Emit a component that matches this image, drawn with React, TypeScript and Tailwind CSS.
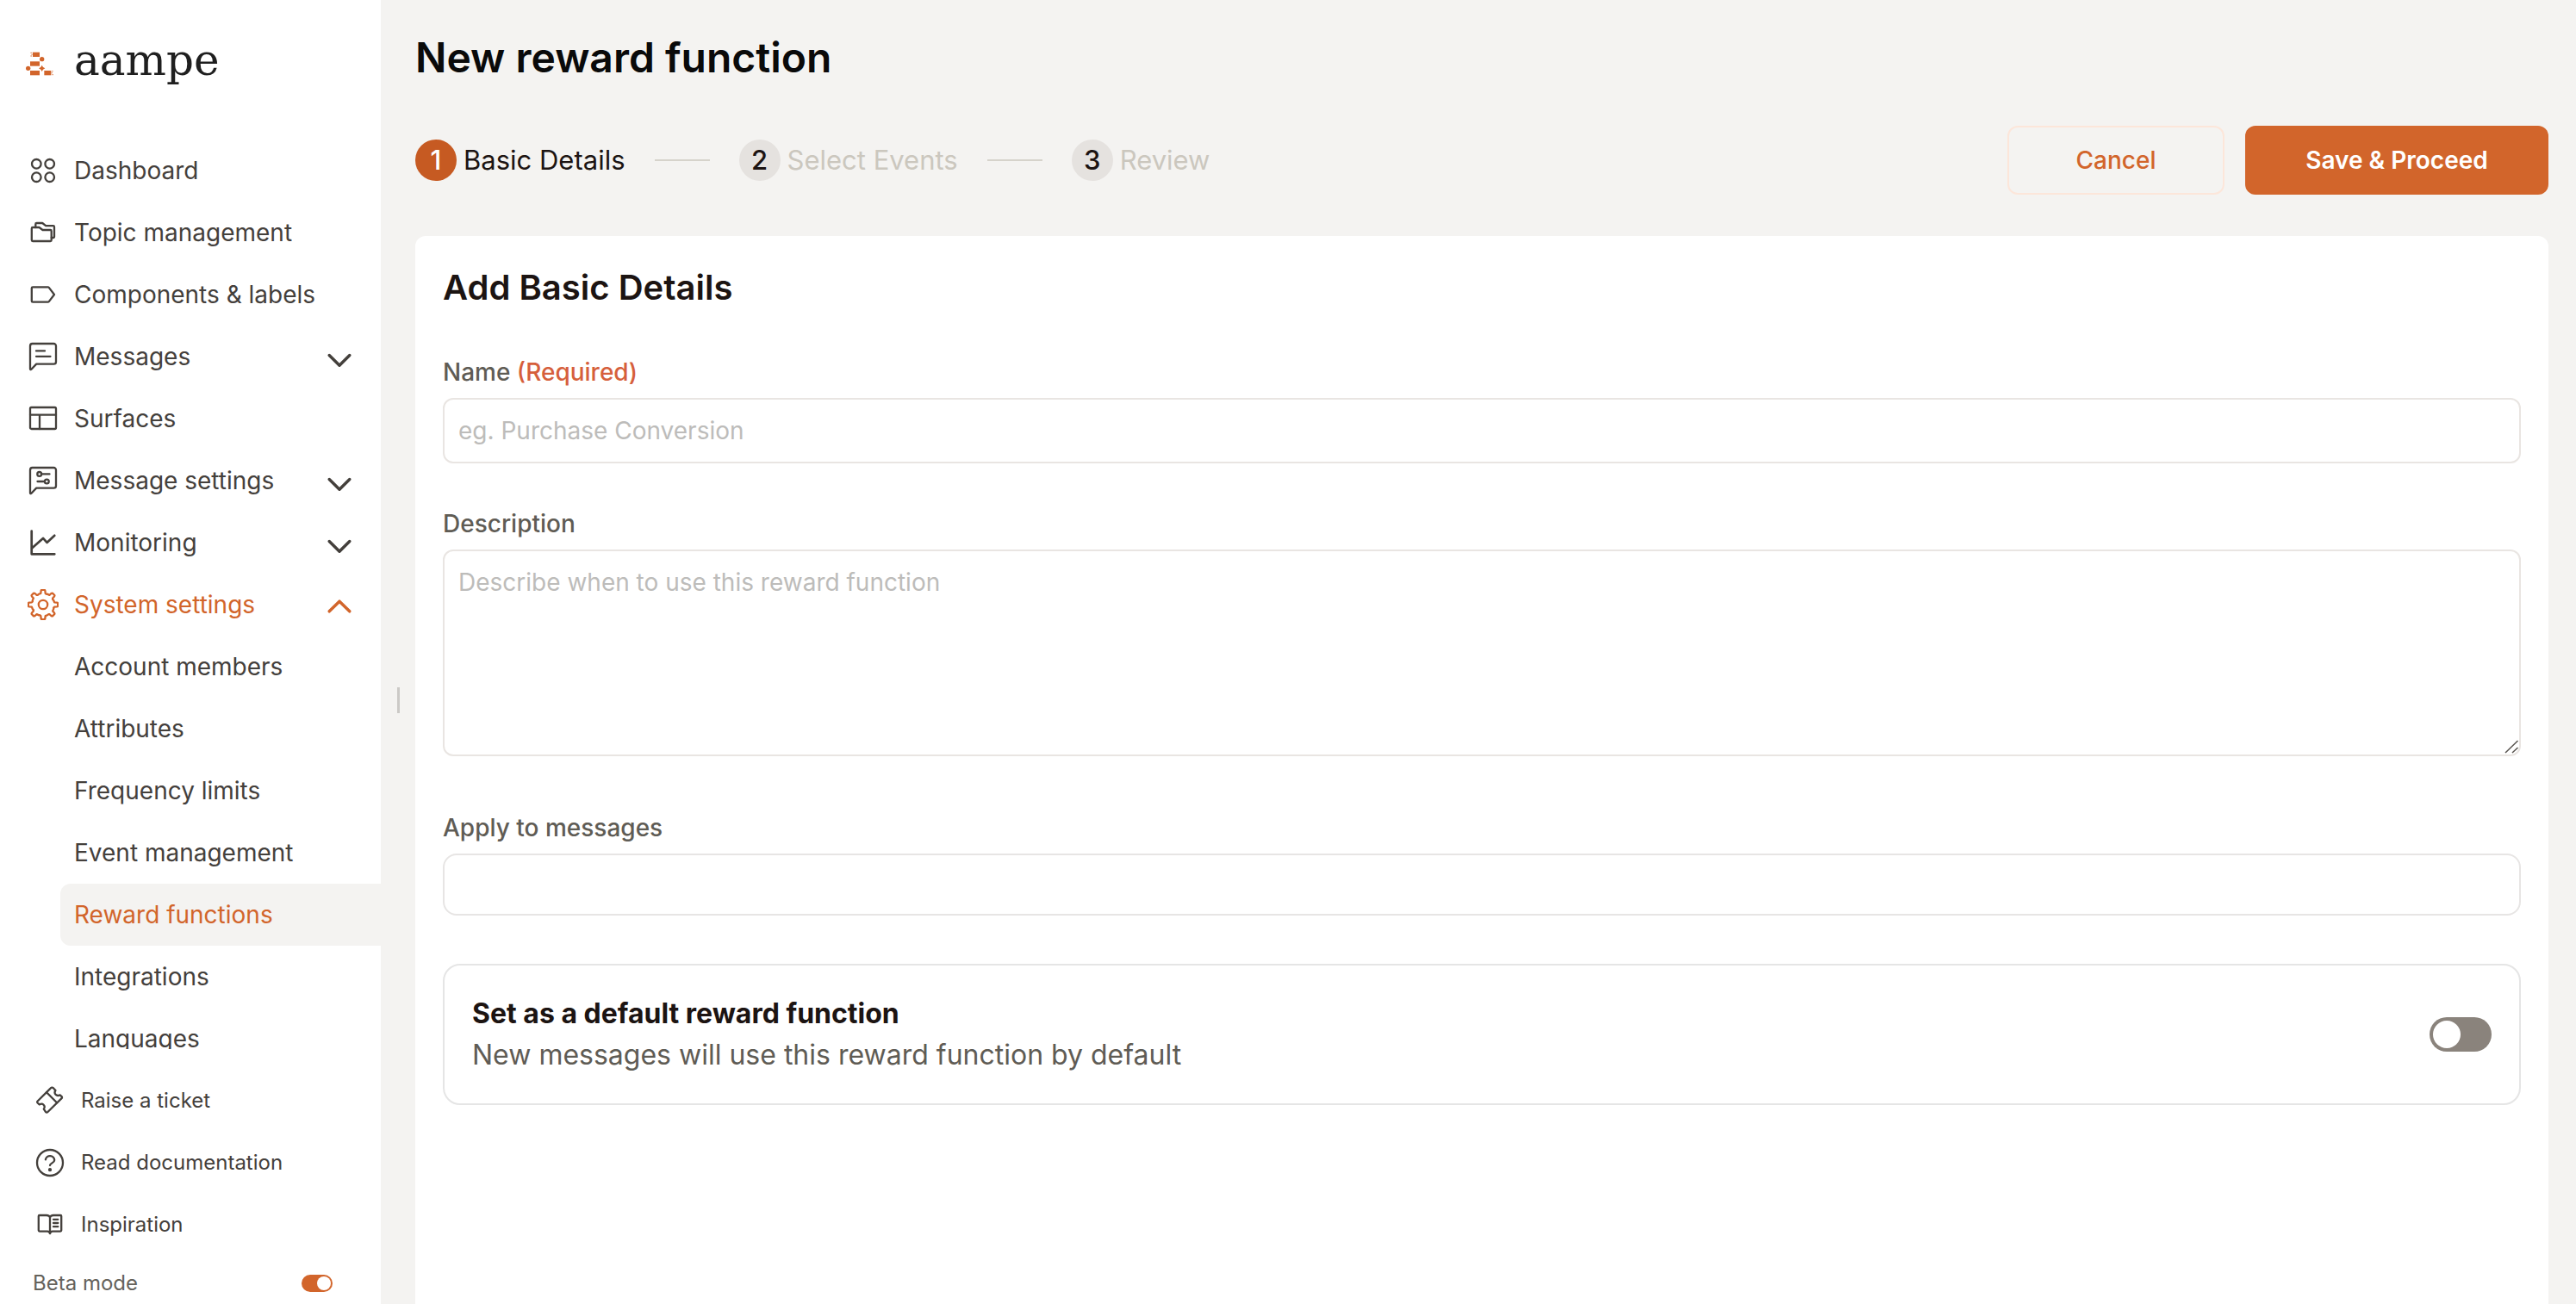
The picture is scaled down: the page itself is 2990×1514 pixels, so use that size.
import type React from "react"

import { useState } from "react"
import clsx from "clsx"

// Eight-toothed cog outline around (18, 18)
const cogPath =
  Array.from({ length: 8 }, (_, i) => {
    const mid = (i * Math.PI) / 4 - Math.PI / 2
    const at = (radius: number, angle: number) =>
      `${(18 + radius * Math.cos(mid + angle)).toFixed(2)} ${(18 + radius * Math.sin(mid + angle)).toFixed(2)}`
    return `${i === 0 ? "M" : "L"}${at(13.4, -0.2)} L${at(16.2, -0.15)} Q${at(17.4, -0.13)} ${at(17.2, -0.06)} L${at(17.2, 0.06)} Q${at(17.4, 0.13)} ${at(16.2, 0.15)} L${at(13.4, 0.2)} Q${at(12.2, 0.3)} ${at(13.2, 0.36)}`
  }).join(" ") + " Z"

const bubble = "M5.5 3h24.8A2.7 2.7 0 0 1 33 5.7v18.2a2.7 2.7 0 0 1-2.7 2.7H10.2L4.4 32.8c-.6.6-1.4.3-1.4-.6V5.7A2.7 2.7 0 0 1 5.5 3z"

const icons: Record<string, React.ReactNode> = {
  dashboard: (
    <>
      <circle cx="10.3" cy="10.3" r="5.3" />
      <circle cx="25.7" cy="10.3" r="5.3" />
      <circle cx="10.3" cy="25.7" r="5.3" />
      <circle cx="25.7" cy="25.7" r="5.3" />
    </>
  ),
  folders: (
    <>
      <path d="M6 12h7.5l4 3h9a1.2 1.2 0 0 1 1.2 1.2v10.6a1.2 1.2 0 0 1-1.2 1.2H6a1.2 1.2 0 0 1-1.2-1.2V13.2A1.2 1.2 0 0 1 6 12z" />
      <path d="M9.3 12V8.2A1.2 1.2 0 0 1 10.5 7h6.7l4 3.2h8.6a1.2 1.2 0 0 1 1.2 1.2v11.4a1.2 1.2 0 0 1-1.2 1.2h-2" />
    </>
  ),
  label: <path d="M6 9.3h17.6a1.5 1.5 0 0 1 1.2.6L31 18l-6.2 8.1a1.5 1.5 0 0 1-1.2.6H6a1.2 1.2 0 0 1-1.2-1.2v-15A1.2 1.2 0 0 1 6 9.3z" />,
  message: (
    <>
      <path d={bubble} />
      <path d="M10 11.4h10M10 17.8h16.5" />
    </>
  ),
  layout: (
    <>
      <rect x="3" y="5" width="30" height="25" rx="1.5" />
      <path d="M3 13.6h30M14 13.6V30" />
    </>
  ),
  messageSettings: (
    <>
      <path d={bubble} />
      <circle cx="13.7" cy="10.4" r="2.4" />
      <circle cx="22.3" cy="19" r="2.4" />
      <path d="M16.2 10.4h9.3M11.5 19h8.3" />
    </>
  ),
  chart: (
    <>
      <path strokeWidth="2.7" d="M4.7 4.5v26.8h26.6" />
      <path strokeWidth="2.7" d="M5.3 24.2L18 12.9l4.5 5 8.8-8.1" />
    </>
  ),
  cog: (
    <>
      <path d={cogPath} />
      <circle cx="18" cy="18" r="5.2" />
    </>
  ),
  ticket: (
    <>
      <path d="M18.6 3.6L3.6 18.5a1.4 1.4 0 0 0 0 2l2.1 1.9c1.5-.8 3.5-1.1 4.9.3s1.2 3.5.2 5l2.3 3.4a1.4 1.4 0 0 0 2.1.1L31.6 15.1a1.3 1.3 0 0 0 0-1.9l-2-1.9c-1.5.8-3.6.9-4.9-.4s-1.3-3.4-.3-4.9l-2.3-2.6a2.5 2.5 0 0 0-3.5.2z" />
      <path d="M14 8.2l12 12" />
    </>
  ),
  help: (
    <>
      <circle cx="18" cy="18" r="15" />
      <path d="M12.9 14.3a5.2 5.2 0 0 1 10.3.6c0 3.2-5.2 3.6-5.2 6.2" />
      <circle cx="18" cy="26.2" r="1" fill="currentColor" />
    </>
  ),
  book: (
    <>
      <path d="M5.8 7H14c2.2 0 4 1.2 4 2.8C18 8.2 19.8 7 22 7h8.2a1 1 0 0 1 1 1v16.6a1 1 0 0 1-1 1H21c-1.6 0-2.6 1-3 2.6-.4-1.6-1.4-2.6-3-2.6H5.8a1 1 0 0 1-1-1V8a1 1 0 0 1 1-1zM18 9.8V28" />
      <path d="M22 11.8h5.3M22 16h5.3M22 20.2h5.3" />
    </>
  ),
  chevronDown: <path strokeWidth="3.5" d="M6.2 16.6L18 28.2l11.8-11.6" />,
  chevronUp: <path strokeWidth="3.5" d="M6.2 25.8L18 14.2l11.8 11.6" />,
}

function Icon({ name }: { name: string }) {
  return (
    <svg
      viewBox="0 0 36 36"
      className="h-9 w-9 shrink-0"
      fill="none"
      stroke="currentColor"
      strokeWidth="2.3"
      strokeLinecap="round"
      strokeLinejoin="round"
      aria-hidden="true"
    >
      {icons[name]}
    </svg>
  )
}

function Logo() {
  return (
    <svg viewBox="90 156 96 108" className="h-9 w-8 shrink-0" fill="#d2652b" aria-hidden="true">
      <rect x="114" y="182" width="24" height="16" />
      <path d="M106 182h6v4h-6zM109 188h4v4h-4zM106 193h5v4h-5z" opacity="0.6" />
      <circle cx="146" cy="206" r="8" />
      <rect x="105" y="214" width="33" height="16" />
      <circle cx="98" cy="238" r="8" />
      <path d="M146 227l4 7 7 4-7 4-4 7-4-7-7-4 7-4z" />
      <rect x="105" y="246" width="33" height="16" />
      <rect x="154" y="246" width="24" height="16" />
      <path d="M180 246h5v4h-5zM179 252h4v4h-4zM181 258h5v4h-5z" opacity="0.6" />
    </svg>
  )
}

const menu = [
  { label: "Dashboard", icon: "dashboard" },
  { label: "Topic management", icon: "folders" },
  { label: "Components & labels", icon: "label" },
  { label: "Messages", icon: "message", group: true },
  { label: "Surfaces", icon: "layout" },
  { label: "Message settings", icon: "messageSettings", group: true },
  { label: "Monitoring", icon: "chart", group: true },
]

const systemSettings = [
  "Account members",
  "Attributes",
  "Frequency limits",
  "Event management",
  "Reward functions",
  "Integrations",
  "Languages",
]

const help = [
  { label: "Raise a ticket", icon: "ticket" },
  { label: "Read documentation", icon: "help" },
  { label: "Inspiration", icon: "book" },
]

const steps = ["Basic Details", "Select Events", "Review"]

function Sidebar() {
  const [open, setOpen] = useState(true)
  const [beta, setBeta] = useState(true)
  const row = "flex h-[72px] w-full shrink-0 items-center gap-[18px] pl-8 pr-[30px] text-left"

  return (
    <aside className="flex w-[442px] shrink-0 flex-col bg-white text-[28px] text-[#44403c]">
      <div className="flex h-[162px] shrink-0 items-start px-[30px] pt-[42px]">
        <a href="#" className="flex items-center gap-6">
          <Logo />
          <span className="font-['DejaVu_Serif',serif] text-[50px] leading-[56px] text-[#1f1f1f]">aampe</span>
        </a>
      </div>

      <nav className="min-h-0 flex-1 overflow-x-hidden overflow-y-auto [scrollbar-width:none]">
        {menu.map((item) =>
          item.group ? (
            <button key={item.label} type="button" className={row}>
              <Icon name={item.icon} />
              <span className="flex-1">{item.label}</span>
              <Icon name="chevronDown" />
            </button>
          ) : (
            <a key={item.label} href="#" className={row}>
              <Icon name={item.icon} />
              {item.label}
            </a>
          ),
        )}
        <button type="button" aria-expanded={open} onClick={() => setOpen(!open)} className={clsx(row, "text-[#d2652b]")}>
          <Icon name="cog" />
          <span className="flex-1">System settings</span>
          <Icon name={open ? "chevronUp" : "chevronDown"} />
        </button>
        {open && (
          <div className="pl-[70px]">
            {systemSettings.map((label) => (
              <a
                key={label}
                href="#"
                className={clsx(
                  "flex h-[72px] items-center rounded-l-xl pl-4",
                  label === "Reward functions" && "bg-[#f4f3f1] text-[#d2652b]",
                )}
              >
                {label}
              </a>
            ))}
          </div>
        )}
      </nav>

      <div className="shrink-0 pt-6 text-2xl">
        {help.map((item) => (
          <a key={item.label} href="#" className="flex h-[72px] items-center gap-[18px] pl-10">
            <Icon name={item.icon} />
            {item.label}
          </a>
        ))}
        <div className="flex h-14 items-center justify-between pt-2 pl-[38px] pr-14 text-[#65625b]">
          <label htmlFor="beta">Beta mode</label>
          <input
            id="beta"
            type="checkbox"
            role="switch"
            checked={beta}
            onChange={(e) => setBeta(e.target.checked)}
            className="h-5 w-9 appearance-none rounded-full bg-[#8a837c] p-0.5 before:block before:h-4 before:w-4 before:rounded-full before:bg-white checked:bg-[#d2652b] checked:before:translate-x-4"
          />
        </div>
      </div>
    </aside>
  )
}

export default function App() {
  const [name, setName] = useState("")
  const [description, setDescription] = useState("")
  const [messages, setMessages] = useState("")
  const [isDefault, setIsDefault] = useState(false)

  return (
    <div className="flex h-screen overflow-hidden bg-[#f4f3f1] font-['Inter',sans-serif]">
      <Sidebar />

      {/* Resize handle */}
      <div className="flex w-10 shrink-0 items-center justify-center pt-28">
        <div className="h-[30px] w-[3px] bg-[#cbc9c6]" />
      </div>

      <main className="flex min-w-0 flex-1 flex-col pt-[37px] pr-8">
        <h1 className="text-[48px] leading-[60px] font-semibold text-[#0a0a0a]">New reward function</h1>

        <div className="mt-[49px] flex items-center justify-between">
          <ol className="flex items-center gap-[34px] text-[31px] leading-10">
            {steps.map((step, i) => (
              <li key={step} className="flex items-center gap-[34px]">
                {i > 0 && <span className="h-0.5 w-16 bg-[#d6d3cb]" />}
                <span className="flex items-center gap-2">
                  <span
                    className={clsx(
                      "flex h-12 w-12 items-center justify-center rounded-full font-medium",
                      i === 0 ? "bg-[#c65a22] text-white" : "bg-[#e5e2df] text-[#1c1412]",
                    )}
                  >
                    {i + 1}
                  </span>
                  <span className={i === 0 ? "text-[#1c1412]" : "text-[#cbc7be]"}>{step}</span>
                </span>
              </li>
            ))}
          </ol>
          <div className="flex gap-6 text-[28px]">
            <button type="button" className="h-20 w-[252px] rounded-xl border-2 border-[#fce6da] font-medium text-[#d2652b]">
              Cancel
            </button>
            <button type="submit" form="reward" className="h-20 w-[352px] rounded-xl bg-[#d2652b] font-semibold text-white">
              Save &amp; Proceed
            </button>
          </div>
        </div>

        <form
          id="reward"
          onSubmit={(e) => e.preventDefault()}
          className="mt-12 flex-1 rounded-t-xl bg-white px-8 pt-9 text-[28px] leading-9"
        >
          <h2 className="text-[40px] leading-[48px] font-semibold text-[#1c1412]">Add Basic Details</h2>

          <div className="mt-14">
            <label htmlFor="name" className="block font-medium text-[#5f5c55]">
              Name <span className="text-[#d65f3c]">(Required)</span>
            </label>
            <input
              id="name"
              type="text"
              value={name}
              onChange={(e) => setName(e.target.value)}
              placeholder="eg. Purchase Conversion"
              className="mt-3 block h-[76px] w-full rounded-xl border-2 border-[#e9e5e2] px-4 placeholder:text-[#bdbcba]"
            />
          </div>

          <div className="mt-[52px]">
            <label htmlFor="description" className="block font-medium text-[#5f5c55]">
              Description
            </label>
            <div className="relative mt-3">
              <textarea
                id="description"
                value={description}
                onChange={(e) => setDescription(e.target.value)}
                placeholder="Describe when to use this reward function"
                className="block h-60 w-full resize-none rounded-xl border-2 border-[#e9e5e2] px-4 py-4 leading-10 placeholder:text-[#bdbcba]"
              />
              <svg viewBox="0 0 16 16" className="pointer-events-none absolute right-[3px] bottom-[3px] h-4 w-4" aria-hidden="true">
                <path d="M1 15L15.5 1M9 15l6.5-6" stroke="#57534e" strokeWidth="1.5" />
              </svg>
            </div>
          </div>

          <div className="mt-[65px]">
            <label htmlFor="messages" className="block font-medium text-[#5f5c55]">
              Apply to messages
            </label>
            <input
              id="messages"
              type="text"
              value={messages}
              onChange={(e) => setMessages(e.target.value)}
              className="mt-3 block h-[72px] w-full rounded-2xl border-2 border-[#e7e5e4] px-4"
            />
          </div>

          <div className="mt-14 flex h-[164px] items-center justify-between rounded-[20px] border-2 border-[#e5e5e5] px-8 text-[32px] leading-[48px]">
            <div>
              <label htmlFor="default" className="block font-bold text-[#1c1412]">
                Set as a default reward function
              </label>
              <p className="text-[#5f5c55]">New messages will use this reward function by default</p>
            </div>
            <input
              id="default"
              type="checkbox"
              role="switch"
              checked={isDefault}
              onChange={(e) => setIsDefault(e.target.checked)}
              className="h-10 w-[72px] shrink-0 appearance-none rounded-full bg-[#8a837c] p-1 before:block before:h-8 before:w-8 before:rounded-full before:bg-white checked:bg-[#d2652b] checked:before:translate-x-8"
            />
          </div>
        </form>
      </main>
    </div>
  )
}
